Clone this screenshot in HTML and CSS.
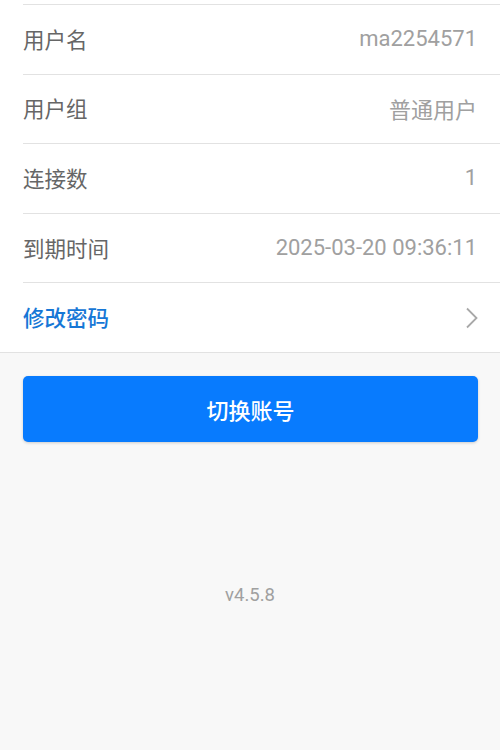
FILE: index.html
```html
<!DOCTYPE html>
<html lang="zh">
<head>
<meta charset="utf-8">
<link rel="stylesheet" href="styles.css">
</head>
<body>
<div class="list">
  <div class="row"><span class="label">用户名</span><span class="value">ma2254571</span></div>
  <div class="row"><span class="label">用户组</span><span class="value">普通用户</span></div>
  <div class="row"><span class="label">连接数</span><span class="value">1</span></div>
  <div class="row"><span class="label">到期时间</span><span class="value">2025-03-20 09:36:11</span></div>
  <div class="row link"><span class="label">修改密码</span>
    <svg class="chev" width="14" height="22" viewBox="0 0 14 22"><path d="M2 1.5 L11.5 11 L2 20.5" fill="none" stroke="#a8a8a8" stroke-width="1.8"/></svg>
  </div>
</div>
<div class="actions">
  <button class="btn">切换账号</button>
</div>
<div class="version">v4.5.8</div>
</body>
</html>
```
FILE: styles.css
```css
html, body {
  margin: 0;
  padding: 0;
  background: #f8f8f8;
  font-family: Roboto, "Noto Sans CJK SC", sans-serif;
}
.list {
  background: #fff;
  padding-top: 4px;
  border-bottom: 1.5px solid #e2e2e2;
}
.row {
  height: 68.6px;
  margin-left: 23px;
  padding-right: 23px;
  border-top: 1px solid #e2e2e2;
  display: flex;
  align-items: center;
  justify-content: space-between;
}
.label {
  font-size: 21.5px;
  color: #666;
  margin-top: -2px;
}
.value {
  font-size: 22px;
  color: #a0a0a0;
  margin-top: -2px;
}
.link .label {
  color: #1677d6;
  font-weight: 500;
}
.chev {
  margin-right: -2px;
}
.actions {
  padding: 23px 22px 0 23px;
}
.btn {
  width: 100%;
  height: 66px;
  border: none;
  border-radius: 5px;
  background: #087bfe;
  color: #fff;
  font-family: Roboto, "Noto Sans CJK SC", sans-serif;
  font-size: 22px;
  font-weight: 500;
  box-shadow: 0 1px 3px rgba(0,0,0,0.18);
}
.version {
  margin-top: 142px;
  text-align: center;
  font-size: 18.5px;
  color: #a0a0a0;
}
```
